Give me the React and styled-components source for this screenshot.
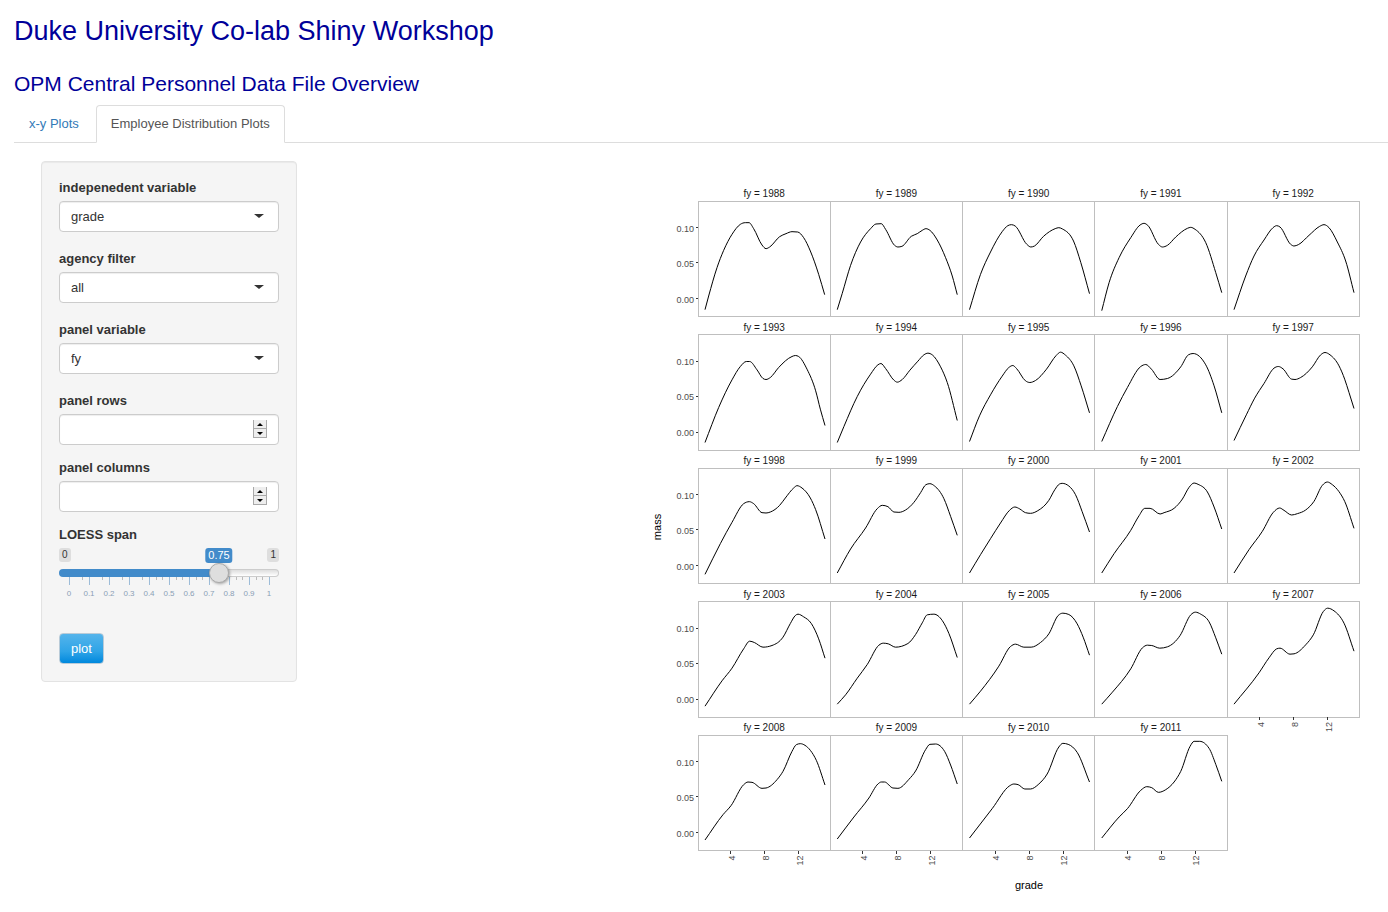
import React, { useState } from "react";
import styled, { createGlobalStyle } from "styled-components";

const GlobalStyle = createGlobalStyle`
  *, *::before, *::after { box-sizing: border-box; }
  body {
    margin: 0;
    background: #fff;
    color: #333;
    font-family: "Liberation Sans", Arial, Helvetica, sans-serif;
    font-size: 13px;
    line-height: 18px;
  }
`;

const Page = styled.div`
  padding: 16px 0 12px 14px;
`;

const Title = styled.h1`
  margin: 0 0 26px;
  color: #000099;
  font-size: 27px;
  font-weight: 400;
  line-height: 30px;
`;

const Subtitle = styled.h2`
  margin: 0 0 9px;
  color: #000099;
  font-size: 21px;
  font-weight: 400;
  line-height: 24px;
`;

const Tabs = styled.nav`
  display: flex;
  gap: 2px;
  border-bottom: 1px solid #ddd;
`;

const Tab = styled.a`
  margin-bottom: -1px;
  padding: 9px 14px;
  border: 1px solid ${(p) => (p.$active ? "#ddd" : "transparent")};
  border-bottom-color: ${(p) => (p.$active ? "#fff" : "transparent")};
  border-radius: 4px 4px 0 0;
  color: ${(p) => (p.$active ? "#555" : "#337ab7")};
  text-decoration: none;
`;

const Main = styled.main`
  display: flex;
  align-items: flex-start;
  justify-content: space-between;
  gap: 27px;
  padding: 18px 15px 0 27px;
`;

const Well = styled.form`
  flex: none;
  width: 256px;
  padding: 17px;
  border: 1px solid #e3e3e3;
  border-radius: 4px;
  background: #f5f5f5;
  box-shadow: inset 0 1px 1px rgba(0, 0, 0, 0.05);
`;

const Field = styled.div`
  margin-bottom: ${(p) => (p.$compact ? 14 : 18)}px;
`;

const Label = styled.label`
  display: block;
  margin-bottom: 4px;
  font-weight: 700;
`;

const ControlBox = styled.div`
  position: relative;
`;

const controlStyle = `
  display: block;
  width: 100%;
  height: 31px;
  margin: 0;
  padding: 0 11px;
  border: 1px solid #ccc;
  border-radius: 4px;
  background: #fff;
  box-shadow: inset 0 1px 1px rgba(0, 0, 0, 0.07);
  color: #333;
  font: inherit;
  appearance: none;
`;

const Select = styled.select`
  ${controlStyle}
`;

const NumberInput = styled.input`
  ${controlStyle}
  padding-right: 30px;
  appearance: textfield;
  &::-webkit-inner-spin-button { appearance: none; margin: 0; }
`;

const Caret = styled.span`
  position: absolute;
  top: 13px;
  right: 15px;
  border: solid transparent;
  border-width: 4px 5px 0;
  border-top-color: #333;
  pointer-events: none;
`;

const Spinner = styled.div`
  position: absolute;
  top: 6px;
  right: 12px;
  display: flex;
  flex-direction: column;
  width: 14px;
  height: 18px;
  background: #f0f0f0;
`;

const SpinButton = styled.button`
  flex: 1;
  display: grid;
  place-items: center;
  width: 100%;
  padding: 0;
  border: solid #a9a9a9;
  border-width: 0 1px 1px;
  background: #eee;
`;

const SliderHead = styled.div`
  position: relative;
  display: flex;
  justify-content: space-between;
  margin-bottom: 1px;
`;

const Bubble = styled.output`
  padding: 0 3px;
  border-radius: 3px;
  background: #dedede;
  color: #333;
  font-size: 10px;
  line-height: 14px;
`;

const ValueBubble = styled(Bubble)`
  position: absolute;
  transform: translateX(-50%);
  background: #428bca;
  color: #fff;
  font-size: 11px;
  line-height: 15px;
`;

const Range = styled.input`
  position: relative;
  display: block;
  width: 100%;
  height: 20px;
  margin: 0;
  appearance: none;
  background: none;

  &::-webkit-slider-runnable-track {
    height: 8px;
    border: 1px solid transparent;
    border-radius: 4px;
    background: linear-gradient(90deg, #428bca ${(p) => p.$fill}%, transparent 0) border-box,
      linear-gradient(#ddd, #fff) padding-box,
      linear-gradient(#ccc, #ccc) border-box;
  }
  &::-webkit-slider-thumb {
    width: 20px;
    height: 20px;
    margin-top: -7px;
    border: 1px solid #aaa;
    border-radius: 50%;
    appearance: none;
    background: #dedede;
    box-shadow: 1px 1px 3px rgba(0, 0, 0, 0.35);
  }
`;

const Scale = styled.div`
  margin-top: -6px;
  margin-bottom: 31px;
`;

const TickMarks = styled.svg`
  display: block;
  width: 100%;
  height: 8px;
`;

const TickLabels = styled.div`
  display: flex;
  color: #8a9fb5;
  font-size: 8px;
  line-height: 17px;
  text-align: center;
`;

const TickLabel = styled.span`
  flex: 1;
`;

const PlotButton = styled.button`
  display: block;
  height: 31px;
  padding: 0 11px;
  border: 1px solid #b9cbd8;
  border-radius: 4px;
  background: linear-gradient(#54b4eb, #2fa4e7 60%, #0088dd);
  color: #fff;
  font: inherit;
`;

const Figure = styled.figure`
  flex: 0 1 728px;
  min-width: 0;
  margin: 3px 0 0;
`;

const Chart = styled.svg`
  display: block;
  width: 100%;
  height: auto;
  font-family: "Liberation Sans", Arial, sans-serif;
`;

/* Smoothed mass by grade. Each panel is traced on a 396 x 346 grid. */
const CURVES = [
  [1988, "18,326 29,285 54,200 74,148 99,100 124,70 139,65 150,65 164,83 189,132 201,143 212,138 242,107 261,98 279,92 296,93 314,110 334,150 359,220 377,281"],
  [1989, "18,326 33,277 58,193 88,123 118,83 134,69 150,68 163,85 190,133 200,138 212,136 240,106 258,98 273,88 284,83 296,88 318,117 343,170 363,225 378,281"],
  [1990, "18,326 51,220 81,153 116,92 133,74 144,71 155,75 190,130 202,138 213,135 240,106 275,83 286,80 297,84 330,120 352,185 378,278"],
  [1991, "18,329 40,245 70,170 105,110 133,72 145,67 156,73 188,130 200,138 215,133 240,108 275,82 285,79 298,85 330,125 360,215 378,275"],
  [1992, "18,326 53,225 78,165 108,117 135,80 146,74 156,78 188,130 198,135 211,131 243,103 275,76 288,71 303,80 328,123 353,180 378,275"],
  [1993, "18,324 59,219 99,136 124,96 142,81 152,81 174,106 192,132 201,135 214,129 239,99 279,66 289,63 299,66 324,104 350,169 364,224 378,273"],
  [1994, "18,324 38,276 78,186 118,119 140,91 149,87 163,102 188,137 198,143 213,135 236,107 260,80 278,61 290,56 303,61 328,97 348,144 378,258"],
  [1995, "18,321 48,244 81,181 116,125 136,99 148,93 159,102 186,139 199,144 216,138 249,104 278,63 291,53 306,62 331,94 353,154 378,235"],
  [1996, "18,321 65,216 95,159 135,96 150,90 167,104 193,135 215,132 255,97 278,61 292,57 330,91 355,154 378,235"],
  [1997, "18,318 55,241 80,191 108,147 138,101 151,96 165,103 191,134 201,135 218,129 253,97 278,61 291,54 306,61 333,94 350,134 363,174 378,222"],
  [1998, "18,319 64,227 99,163 134,107 151,101 164,107 189,134 201,135 214,132 242,112 259,90 284,60 294,53 309,60 334,90 350,125 378,213"],
  [1999, "18,315 58,243 103,180 138,122 153,112 170,116 188,132 203,133 223,126 248,103 268,74 284,50 296,47 310,54 338,92 358,145 378,202"],
  [2000, "18,315 51,260 81,212 111,165 138,127 154,117 169,123 186,134 201,136 223,128 256,97 274,65 288,48 296,46 316,54 336,80 356,131 378,192"],
  [2001, "18,315 55,257 105,187 130,143 147,121 163,121 193,138 205,134 235,121 260,93 280,58 295,45 307,49 335,72 355,117 378,183"],
  [2002, "18,315 63,245 103,190 136,133 155,120 168,127 191,141 208,137 233,126 258,100 283,52 298,42 313,50 333,71 350,100 378,181"],
  [2003, "18,314 69,238 99,200 134,142 152,119 166,123 192,137 219,132 252,107 274,66 289,42 297,38 314,46 337,66 359,112 378,170"],
  [2004, "18,308 43,280 78,230 108,189 143,131 156,125 171,127 193,137 230,126 253,99 273,64 288,40 308,38 333,57 353,96 378,168"],
  [2005, "18,308 51,269 106,194 141,135 156,128 181,137 203,137 231,123 256,97 284,42 298,35 316,39 341,67 359,107 378,161"],
  [2006, "18,308 50,272 105,202 140,139 155,131 168,132 192,140 215,136 253,102 285,40 299,32 315,38 340,61 360,109 378,158"],
  [2007, "18,308 93,214 123,169 146,142 156,140 186,158 198,157 233,130 256,100 286,30 299,20 318,28 348,65 378,149"],
  [2008, "18,315 72,239 96,212 134,149 147,141 159,142 189,160 201,159 234,134 252,109 279,49 292,29 304,26 318,31 334,46 352,76 378,150"],
  [2009, "18,312 68,246 113,189 140,147 150,141 160,141 185,159 200,160 233,133 253,108 283,44 296,28 313,27 340,49 358,90 378,147"],
  [2010, "18,309 86,221 139,152 151,147 164,149 184,162 201,162 226,147 251,117 286,36 298,25 314,28 341,52 378,141"],
  [2011, "18,309 70,246 95,221 135,166 153,155 168,158 188,172 210,164 235,141 255,109 283,34 295,19 312,19 340,40 360,88 378,139"],
];

const COLUMNS = 5;
const ORIGIN_X = 53;
const ORIGIN_Y = 37;
const PANEL_W = 132.25;
const PANEL_H = 115.5;
const ROW_STEP = 133.5;

const Y_TICKS = [["0.10", 26.5], ["0.05", 61.5], ["0.00", 97.5]];
const X_TICKS = [["4", 32.5], ["8", 66.5], ["12", 100.5]];

/* Piecewise cubic with limited tangents, so peaks stay close to the points. */
function curvePath(text) {
  const pts = text.split(" ").map((p) => p.split(",").map((v) => Number(v) / 3));
  const n = pts.length;
  const slopes = [];
  for (let i = 0; i < n - 1; i++) {
    slopes.push((pts[i + 1][1] - pts[i][1]) / (pts[i + 1][0] - pts[i][0]));
  }
  const tangent = (i) => {
    if (i === 0) return slopes[0];
    if (i === n - 1) return slopes[n - 2];
    const a = slopes[i - 1];
    const b = slopes[i];
    if (a * b <= 0) return 0;
    const before = pts[i][0] - pts[i - 1][0];
    const after = pts[i + 1][0] - pts[i][0];
    const blend = (a * after + b * before) / (before + after);
    const limit = 2 * Math.min(Math.abs(a), Math.abs(b));
    return Math.sign(blend) * Math.min(Math.abs(blend), limit);
  };
  let d = `M${pts[0][0]} ${pts[0][1]}`;
  for (let i = 0; i < n - 1; i++) {
    const [x0, y0] = pts[i];
    const [x1, y1] = pts[i + 1];
    const h = (x1 - x0) / 3;
    d += `C${x0 + h} ${y0 + h * tangent(i)} ${x1 - h} ${y1 - h * tangent(i + 1)} ${x1} ${y1}`;
  }
  return d;
}

function Panel({ year, points, index }) {
  const col = index % COLUMNS;
  const row = Math.floor(index / COLUMNS);
  const isBottom = index + COLUMNS >= CURVES.length;
  const x = ORIGIN_X + col * PANEL_W;
  const y = ORIGIN_Y + row * ROW_STEP;
  return (
    <g transform={`translate(${x} ${y})`}>
      <text x={PANEL_W / 2} y={-4} textAnchor="middle" fontSize="10" fill="#1a1a1a">
        {`fy = ${year}`}
      </text>
      <rect width={PANEL_W} height={PANEL_H} fill="none" stroke="#bfbfbf" shapeRendering="crispEdges" />
      <path d={curvePath(points)} transform="translate(1 0)" fill="none" stroke="#000" />
      {col === 0 &&
        Y_TICKS.map(([label, ty]) => (
          <g key={label}>
            <path d={`M-2 ${ty}h2`} stroke="#333" shapeRendering="crispEdges" />
            <text x={-4} y={ty + 4} textAnchor="end" fontSize="9" fill="#4d4d4d">{label}</text>
          </g>
        ))}
      {isBottom &&
        X_TICKS.map(([label, tx]) => (
          <g key={label}>
            <path d={`M${tx} ${PANEL_H}v3`} stroke="#333" shapeRendering="crispEdges" />
            <text
              transform={`translate(${tx + 4} ${PANEL_H + 5}) rotate(-90)`}
              textAnchor="end"
              fontSize="9"
              fill="#4d4d4d"
            >
              {label}
            </text>
          </g>
        ))}
    </g>
  );
}

function SelectField({ id, label, options }) {
  return (
    <Field>
      <Label htmlFor={id}>{label}</Label>
      <ControlBox>
        <Select id={id}>
          {options.map((o) => (
            <option key={o}>{o}</option>
          ))}
        </Select>
        <Caret />
      </ControlBox>
    </Field>
  );
}

function NumberField({ id, label }) {
  const [value, setValue] = useState("");
  const step = (by) => setValue(String(Number(value) + by));
  return (
    <Field $compact>
      <Label htmlFor={id}>{label}</Label>
      <ControlBox>
        <NumberInput id={id} type="number" value={value} onChange={(e) => setValue(e.target.value)} />
        <Spinner>
          <SpinButton type="button" aria-label={`Increase ${label}`} onClick={() => step(1)}>
            <svg width="6" height="3"><path d="M3 0l3 3H0z" fill="#000" /></svg>
          </SpinButton>
          <SpinButton type="button" aria-label={`Decrease ${label}`} onClick={() => step(-1)}>
            <svg width="6" height="3"><path d="M0 0h6L3 3z" fill="#000" /></svg>
          </SpinButton>
        </Spinner>
      </ControlBox>
    </Field>
  );
}

const SCALE = ["0", "0.1", "0.2", "0.3", "0.4", "0.5", "0.6", "0.7", "0.8", "0.9", "1"];

function SpanSlider() {
  const [value, setValue] = useState(0.75);
  return (
    <div>
      <Label htmlFor="span">LOESS span</Label>
      <SliderHead>
        <Bubble>0</Bubble>
        <ValueBubble htmlFor="span" style={{ left: 10 + value * 200 }}>{value}</ValueBubble>
        <Bubble>1</Bubble>
      </SliderHead>
      <Range
        id="span"
        type="range"
        min="0"
        max="1"
        step="0.01"
        value={value}
        $fill={value * 91 + 4}
        onChange={(e) => setValue(Number(e.target.value))}
      />
      <Scale>
        <TickMarks viewBox="0 0 220 8" shapeRendering="crispEdges">
          {SCALE.map((s, i) => (
            <g key={s} transform={`translate(${10 + i * 20} 0)`}>
              <path d="M.5 0v8" stroke="#9dbcd8" />
              {i < 10 && <path d="M13.5 0v3" stroke="#bbb" />}
              {i > 3 && i < 10 && <path d="M7.5 0v3" stroke="#bbb" />}
            </g>
          ))}
        </TickMarks>
        <TickLabels>
          {SCALE.map((s) => (
            <TickLabel key={s}>{s}</TickLabel>
          ))}
        </TickLabels>
      </Scale>
    </div>
  );
}

export default function App() {
  return (
    <Page>
      <GlobalStyle />
      <Title>Duke University Co-lab Shiny Workshop</Title>
      <Subtitle>OPM Central Personnel Data File Overview</Subtitle>
      <Tabs>
        <Tab href="#xy">x-y Plots</Tab>
        <Tab href="#distribution" $active aria-current="page">Employee Distribution Plots</Tab>
      </Tabs>
      <Main>
        <Well onSubmit={(e) => e.preventDefault()}>
          <SelectField id="indep" label="indepenedent variable" options={["grade"]} />
          <SelectField id="agency" label="agency filter" options={["all"]} />
          <SelectField id="panel" label="panel variable" options={["fy"]} />
          <NumberField id="rows" label="panel rows" />
          <NumberField id="cols" label="panel columns" />
          <SpanSlider />
          <PlotButton type="submit">plot</PlotButton>
        </Well>
        <Figure>
          <Chart viewBox="0 0 728 735" role="img" aria-label="mass by grade for each fy">
            {CURVES.map(([year, points], i) => (
              <Panel key={year} year={year} points={points} index={i} />
            ))}
            <text x="384" y="725" textAnchor="middle" fontSize="11" fill="#000">grade</text>
            <text transform="translate(16 363) rotate(-90)" textAnchor="middle" fontSize="11" fill="#000">mass</text>
          </Chart>
        </Figure>
      </Main>
    </Page>
  );
}
